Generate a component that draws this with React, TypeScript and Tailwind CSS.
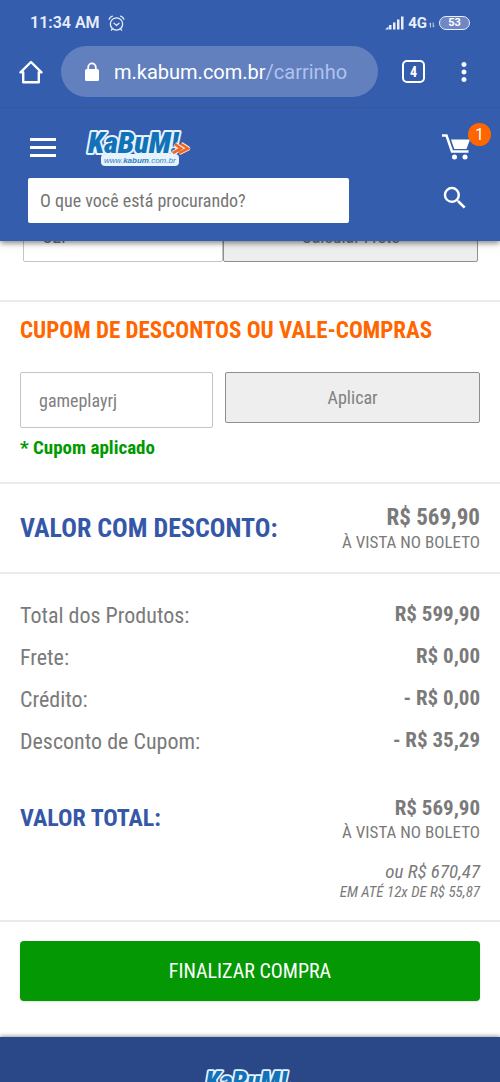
import type { ReactNode } from "react";
import { MdMoreVert, MdSearch } from "react-icons/md";

type SummaryRow = {
  label: string;
  value: string;
};

const summaryRows: SummaryRow[] = [
  { label: "Total dos Produtos:", value: "R$ 599,90" },
  { label: "Frete:", value: "R$ 0,00" },
  { label: "Crédito:", value: "- R$ 0,00" },
  { label: "Desconto de Cupom:", value: "- R$ 35,29" }
];

const KabumLogo = ({ className }: { className?: string }) => (
  <svg viewBox="0 0 108 40" className={className} role="img" aria-label="KaBuM!">
    <rect x="17" y="27" width="78" height="12" rx="4" fill="#e6f3ff" />
    <text
      x="4"
      y="26"
      fontFamily="'Roboto Condensed', 'Liberation Sans', sans-serif"
      fontSize="30"
      fontStyle="italic"
      fontWeight="900"
      fill="#1272b8"
      stroke="#e6f3ff"
      strokeWidth="4"
      strokeLinejoin="round"
      paintOrder="stroke"
    >
      KaBuM!
    </text>
    <path
      d="M91 17l6 4.500-8 4.500M97 17l7 4.500-9 4.500"
      fill="none"
      stroke="#ffe9dc"
      strokeWidth="4.5"
      strokeLinejoin="round"
    />
    <path
      d="M91 17l6 4.500-8 4.500M97 17l7 4.500-9 4.500"
      fill="none"
      stroke="#f26522"
      strokeWidth="2.6"
    />
    <text
      x="20"
      y="36"
      fontFamily="'Liberation Sans', Arial, sans-serif"
      fontSize="8"
      fontStyle="italic"
      fill="#2f7fbd"
    >
      www.<tspan fontWeight="bold">kabum</tspan>.com.br
    </text>
  </svg>
);

const StatusBar = () => (
  <div className="flex h-[46px] items-center justify-between px-[30px] text-[#e8edfb]">
    <div className="flex items-center gap-2 text-base font-semibold">
      <span>11:34 AM</span>
      <svg
        viewBox="0 0 18 18"
        className="size-[17px]"
        fill="none"
        stroke="currentColor"
        strokeWidth="1.4"
        strokeLinecap="round"
      >
        <circle cx="9" cy="9.5" r="6.5" />
        <path d="M6.3 8.6L9 11l2.7-2.2M1.2 4.4C1.8 2.8 3 1.6 4.6 1.2M16.8 4.4C16.2 2.8 15 1.6 13.4 1.2M4.6 14.6l-1 1.4M13.4 14.6l1 1.4" />
      </svg>
    </div>
    <div className="flex items-center gap-1">
      <svg viewBox="0 0 19 14" className="h-[14px] w-[19px]" fill="currentColor">
        <path d="M0 13.5l3.5-3v3zM4 9h2.500v4.500H4zM8 6.500h2.500v7H8zM12 3.500h2.500v10H12zM16 0.500h2.500v13H16z" />
      </svg>
      <div className="flex items-center gap-0.5">
        <span className="text-[15px] font-bold">4G</span>
        <svg
          viewBox="0 0 6 6"
          className="mt-1 size-[6px]"
          fill="none"
          stroke="currentColor"
          strokeWidth="0.8"
        >
          <path d="M1.5 5.5V1L0.3 2.2M4.2 0.500V5L5.500 3.800" />
        </svg>
      </div>
      <span className="flex h-[14px] w-[31px] items-center justify-center rounded-full border border-[#e8edfb] bg-[#6f88c4] text-[11px] font-bold text-white">
        53
      </span>
    </div>
  </div>
);

const BrowserBar = () => (
  <div className="flex items-center pr-[21px] pb-[10px] pl-[19px]">
    <button type="button" aria-label="Página inicial" className="text-white">
      <svg
        viewBox="0 0 24 24"
        className="size-6"
        fill="none"
        stroke="currentColor"
        strokeWidth="2.4"
        strokeLinejoin="round"
        strokeLinecap="round"
      >
        <path d="M12 2L1.5 12.300H4.200V22.300H19.800V12.300H22.500Z" />
      </svg>
    </button>
    <div className="ml-[18px] flex h-[51px] min-w-0 flex-1 items-center rounded-full bg-[#627fbe] pl-[21px]">
      <svg viewBox="0 0 20 20" className="size-5 text-white" fill="currentColor">
        <rect x="3" y="7" width="14" height="12" rx="1.5" />
        <path
          d="M6.200 8V5.200a3.800 3.800 0 0 1 7.600 0V8"
          fill="none"
          stroke="currentColor"
          strokeWidth="1.800"
        />
      </svg>
      <span className="ml-3 text-xl text-white">
        m.kabum.com.br<span className="text-[#b0c3ee]">/carrinho</span>
      </span>
    </div>
    <button
      type="button"
      aria-label="Abas abertas"
      className="ml-6 flex size-[23px] items-center justify-center rounded-[5px] border-2 border-white font-['Roboto_Condensed','Roboto',sans-serif] text-sm font-bold text-white"
    >
      4
    </button>
    <button type="button" aria-label="Mais opções" className="ml-6 text-white">
      <MdMoreVert className="size-[30px]" />
    </button>
  </div>
);

const SiteHeader = () => (
  <header className="border-t border-[#3a579c] pt-[19px] pr-[10px] pb-[18px] pl-7">
    <div className="flex h-10 items-center">
      <button
        type="button"
        aria-label="Menu"
        className="ml-[2px] flex w-[26px] flex-col gap-[5px]"
      >
        <span className="h-[3px] bg-white" />
        <span className="h-[3px] bg-white" />
        <span className="h-[3px] bg-white" />
      </button>
      <a href="#inicio" className="ml-7">
        <KabumLogo className="h-10 w-[108px]" />
      </a>
      <button
        type="button"
        aria-label="Carrinho, 1 item"
        className="relative mr-[19px] ml-auto text-white"
      >
        <svg viewBox="0 0 30 28" className="h-7 w-[30px]" fill="currentColor">
          <path
            d="M1 2.500H5.500L11 18.500H27.500"
            fill="none"
            stroke="currentColor"
            strokeWidth="2.5"
          />
          <path d="M10 6.500H29L25.500 16H13.300Z" />
          <circle cx="13.5" cy="24" r="2.5" />
          <circle cx="24" cy="24" r="2.5" />
        </svg>
        <span className="absolute -top-[10px] -right-5 flex size-[23px] items-center justify-center rounded-full bg-[#ff6500] font-['Roboto',sans-serif] text-base">
          1
        </span>
      </button>
    </div>
    <form className="mt-[11px] flex items-center" role="search">
      <input
        type="text"
        aria-label="Buscar produtos"
        placeholder="O que você está procurando?"
        className="h-[45px] min-w-0 flex-1 rounded-[2px] bg-white px-3 text-lg text-[#757575] placeholder:text-[#757575]"
      />
      <button
        type="button"
        aria-label="Buscar"
        className="mr-5 ml-[91px] pb-[6px] text-white"
      >
        <MdSearch className="size-[30px]" />
      </button>
    </form>
  </header>
);

const ShippingForm = () => (
  <form className="-mt-[30px] flex pr-[22px] pb-[38px] pl-[23px]">
    <input
      type="text"
      aria-label="CEP"
      placeholder="CEP"
      className="h-[51px] w-[44%] rounded-[2px] border border-[#c4c4c4] px-[18px] text-lg placeholder:text-[#757575]"
    />
    <button
      type="button"
      className="h-[51px] flex-1 rounded-[2px] border border-[#8f8f8f] bg-[#eee] text-lg text-[#757575]"
    >
      Calcular Frete
    </button>
  </form>
);

const CouponForm = () => (
  <section className="border-t-2 border-[#ebebeb] px-5 pt-[13px] pb-[18px]">
    <h2 className="text-[23px] leading-8 font-bold text-[#f60]">
      CUPOM DE DESCONTOS OU VALE-COMPRAS
    </h2>
    <form className="mt-[25px] flex items-start gap-3">
      <input
        type="text"
        aria-label="Cupom de desconto"
        defaultValue="gameplayrj"
        className="h-14 w-[42%] rounded-[2px] border border-[#c4c4c4] px-[18px] text-lg text-[#808080]"
      />
      <button
        type="button"
        className="h-[51px] flex-1 rounded-[2px] border border-[#8f8f8f] bg-[#eee] text-lg text-[#808080]"
      >
        Aplicar
      </button>
    </form>
    <p className="mt-1 text-[19px] leading-8 font-bold text-[#090]">* Cupom aplicado</p>
  </section>
);

const TotalPrice = ({ children }: { children: ReactNode }) => (
  <div className="text-right">
    {children}
    <p className="text-[17px] leading-5">À VISTA NO BOLETO</p>
  </div>
);

const App = () => (
  <div className="flex h-screen flex-col overflow-hidden bg-white font-['Roboto_Condensed','Liberation_Sans_Narrow','Roboto',sans-serif] text-[#7a7a7a]">
    <div className="relative z-10 shrink-0 bg-[#345dae] shadow-[0_2px_6px_rgba(0,0,0,0.5)]">
      <div className="font-['Roboto',sans-serif]">
        <StatusBar />
        <BrowserBar />
      </div>
      <SiteHeader />
    </div>

    <main className="shrink-0">
      <ShippingForm />
      <CouponForm />

      <section className="flex items-center justify-between border-t-2 border-[#ebebeb] px-5 py-5">
        <h2 className="text-[26px] leading-9 font-bold text-[#3557a8]">
          VALOR COM DESCONTO:
        </h2>
        <TotalPrice>
          <p className="text-[23px] leading-7 font-bold">R$ 569,90</p>
        </TotalPrice>
      </section>

      <section className="border-t-2 border-[#ebebeb] px-5 pt-5 pb-[18px]">
        <dl>
          {summaryRows.map((row) => (
            <div
              key={row.label}
              className="flex h-[42px] items-center justify-between"
            >
              <dt className="text-[22px]">{row.label}</dt>
              <dd className="text-[21px] font-bold">{row.value}</dd>
            </div>
          ))}
        </dl>
        <div className="mt-8 flex items-center justify-between">
          <h2 className="text-2xl leading-9 font-bold text-[#3557a8]">VALOR TOTAL:</h2>
          <TotalPrice>
            <p className="text-[21px] leading-7 font-bold">R$ 569,90</p>
          </TotalPrice>
        </div>
        <div className="mt-5 text-right italic">
          <p className="text-[19px] leading-5">ou R$ 670,47</p>
          <p className="text-[15px] leading-5">EM ATÉ 12x DE R$ 55,87</p>
        </div>
      </section>

      <div className="border-t-2 border-[#ebebeb] px-5 pt-[19px] pb-9">
        <button
          type="button"
          className="h-[60px] w-full rounded-[4px] bg-[#049904] text-xl text-white shadow-sm"
        >
          FINALIZAR COMPRA
        </button>
      </div>
    </main>

    <footer className="flex shrink-0 justify-center bg-[#2a4887] pt-[31px] pb-8 shadow-[0_-1px_4px_rgba(0,0,0,0.4)]">
      <KabumLogo className="h-9 w-[97px]" />
    </footer>
  </div>
);

export default App;
